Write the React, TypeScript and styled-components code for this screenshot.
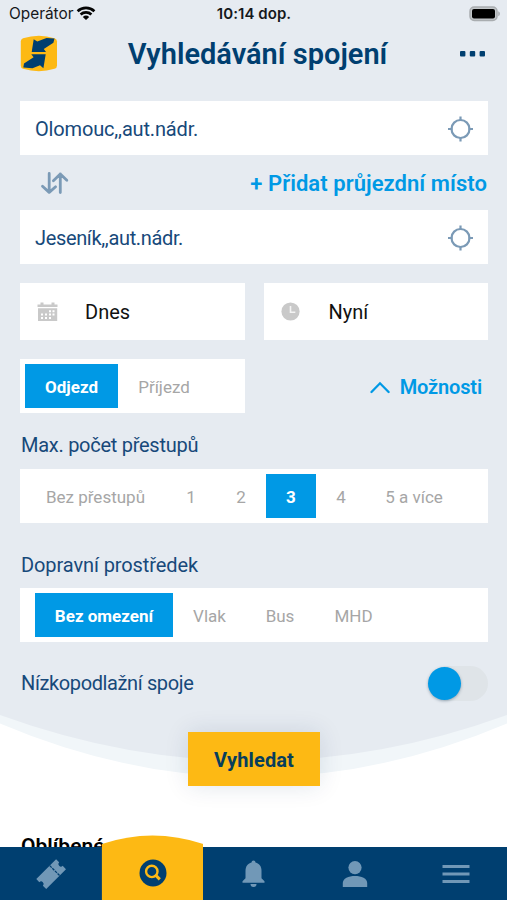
import React from "react";
import styled, { createGlobalStyle } from "styled-components";

const navy = "#003f70";
const blue = "#0099e5";
const yellow = "#fdb914";
const steel = "#7b9ab6";

const GlobalStyle = createGlobalStyle`
  * { box-sizing: border-box; }
  body { margin: 0; background: #fff; }
  button { border: 0; padding: 0; background: none; font: inherit; color: inherit; letter-spacing: inherit; }
  svg { display: block; flex: none; }
`;

const Screen = styled.div`
  width: 507px;
  height: 900px;
  display: flex;
  flex-direction: column;
  overflow: hidden;
  background: #fff;
  color: ${navy};
  font-family: Roboto, sans-serif;
  white-space: nowrap;
`;

const Scroll = styled.main`
  flex: 1;
  min-height: 0;
  overflow: hidden;
`;

const Panel = styled.section`
  height: 714px;
  background: #e6ebf1;
`;

const StatusBar = styled.div`
  display: grid;
  grid-template-columns: 1fr auto 1fr;
  align-items: center;
  height: 27px;
  padding: 0 6px 0 9px;
  color: #15181b;
  font: 400 15.4px Inter, sans-serif;
`;

const Carrier = styled.div`
  display: flex;
  align-items: center;
  gap: 2px;
`;

const Clock = styled.div`
  margin-right: 2px;
  font-weight: 600;
  font-size: 15px;
  letter-spacing: 0.05px;
`;

const BatterySlot = styled.div`
  display: flex;
  justify-content: flex-end;
`;

const Header = styled.header`
  display: flex;
  align-items: center;
  justify-content: space-between;
  height: 74px;
  padding: 0 21px 21px 20px;
`;

const Title = styled.h1`
  margin: 1px 0 0 -2px;
  font-size: 29px;
  font-weight: 600;
`;

const Form = styled.div`
  padding: 0 19px 0 20px;
`;

const PlaceField = styled.div<{ $track: string }>`
  display: flex;
  align-items: center;
  justify-content: space-between;
  height: 54px;
  padding: 1px 15px 0 15px;
  background: #fff;
  color: #17497a;
  font-size: 20px;
  letter-spacing: ${(p) => p.$track};
`;

const ViaRow = styled.div`
  display: flex;
  align-items: center;
  justify-content: space-between;
  height: 55px;
  padding: 2px 1px 0 20px;
`;

const LinkButton = styled.button`
  display: flex;
  align-items: center;
  gap: 9px;
  color: ${blue};
  font-weight: 600;
`;

const ViaButton = styled(LinkButton)`
  font-size: 22px;
  letter-spacing: 0.06px;
`;

const OptionsButton = styled(LinkButton)`
  padding: 2px 6px 0 0;
  font-size: 20px;
  letter-spacing: -0.15px;
`;

const TimeRow = styled.div`
  display: grid;
  grid-template-columns: 1fr 1fr;
  gap: 19px;
  margin: 19px 0;
`;

const TimeField = styled.div`
  display: grid;
  grid-template-columns: 48px 1fr;
  align-items: center;
  height: 57px;
  padding: 1px 17px 0;
  background: #fff;
  color: #111;
  font-size: 20px;
`;

const DirectionRow = styled.div`
  display: flex;
  align-items: center;
  justify-content: space-between;
`;

const Segments = styled.div<{ $inset?: number; $width?: string }>`
  display: flex;
  width: ${(p) => p.$width ?? "100%"};
  height: 54px;
  padding: 5px 5px 5px ${(p) => p.$inset ?? 5}px;
  background: #fff;
`;

const Segment = styled.button<{ $width: number; $active?: boolean }>`
  width: ${(p) => p.$width}px;
  padding-top: 2px;
  background: ${(p) => (p.$active ? blue : "transparent")};
  color: ${(p) => (p.$active ? "#fff" : "#a6a6a6")};
  font-size: 17px;
  font-weight: ${(p) => (p.$active ? 700 : 400)};
  text-align: center;
`;

const Label = styled.div<{ $height: number; $track: string }>`
  display: flex;
  align-items: center;
  height: ${(p) => p.$height}px;
  padding-left: 1px;
  font-size: 20px;
  letter-spacing: ${(p) => p.$track};
  color: #17497a;
`;

const TransfersLabel = styled(Label)`
  padding-top: 7px;
`;

const VehicleLabel = styled(Label)`
  padding-top: 18px;
`;

const AccessRow = styled.div`
  display: flex;
  align-items: center;
  justify-content: space-between;
  height: 82px;
`;

const Toggle = styled.button`
  display: flex;
  align-items: center;
  width: 60px;
  height: 35px;
  border-radius: 18px;
  background: linear-gradient(90deg, transparent 15px, #dfe4e8 16px);
`;

const Thumb = styled.span`
  width: 33px;
  height: 33px;
  border-radius: 50%;
  background: ${blue};
  box-shadow: 0 1px 3px rgba(0, 40, 70, 0.35);
`;

const Submit = styled.button`
  display: block;
  position: relative;
  width: 132px;
  height: 54px;
  margin: -50px auto 0 188px;
  padding-top: 2px;
  background: ${yellow};
  color: #073e5c;
  font-size: 20px;
  font-weight: 700;
  letter-spacing: 0.1px;
  box-shadow: 0 0 24px rgba(0, 50, 90, 0.12);
`;

const Favourites = styled.h2`
  margin: 45px 0 0 21px;
  color: #000;
  font-size: 21px;
  font-weight: 600;
  line-height: 30px;
`;

const TabBar = styled.nav`
  display: grid;
  grid-template-columns: repeat(5, 1fr);
  height: 53px;
  background: ${navy};
  color: #7198b7;
  position: relative;
`;

const Tab = styled.button`
  display: flex;
  align-items: center;
  justify-content: center;
`;

const ActiveTab = styled(Tab)`
  height: 65px;
  margin-top: -12px;
  padding: 11px 0 0 1px;
  background: ${yellow};
  clip-path: path("M0.5 9 Q51 -8 102 9 V65 H0.5Z");
`;

const WifiIcon = () => (
  <svg width="20" height="15" viewBox="0 0 20 15" fill="none" stroke="#050505" strokeWidth="2.7">
    <path d="M1.6 5.2a12.3 12.3 0 0 1 16.800 0M4.600 8.500a8 8 0 0 1 10.800 0" />
    <path d="M10 14 6.800 10.900a4.700 4.700 0 0 1 6.400 0Z" fill="#050505" stroke="none" />
  </svg>
);

const BatteryIcon = () => (
  <svg width="32" height="16" viewBox="0 0 32 16">
    <rect x="1" y="1" width="27" height="13.5" rx="4.2" fill="#c3c7ca" stroke="#a9adb0" strokeWidth="1.5" />
    <rect x="3" y="3" width="23" height="9.5" rx="2" />
    <path d="M29.3 5.3c2 .7 2 4.2 0 4.9Z" fill="#a1a5a8" />
  </svg>
);

const Logo = () => (
  <svg width="38" height="38" viewBox="0 0 38 38">
    <path d="M.8 6.500Q.8 4.300 3 3.300Q19-2 34.500 3.300Q37 4.300 37 6.500V30.500Q37 33 34.500 33.800Q19 38.500 3 33.800Q.8 33 .8 30.500Z" fill={yellow} />
    <path d="M11.700 17 13.700 4.300 17.300 6.500 26.500 3.100 34.500 3.600 33.400 7.800 23.800 14 26 17ZM11.300 19.300H25.700L23.400 33.300 20 30.200 12.500 33.300 3.300 32.500 4 28.600 13.600 22.300Z" fill={navy} />
  </svg>
);

const MoreIcon = () => (
  <svg width="27" height="6" viewBox="0 0 27 6" fill={navy}>
    <rect x="1" y="0" width="5.4" height="5.4" rx="1" />
    <rect x="10.8" y="0" width="5.4" height="5.4" rx="1" />
    <rect x="20.6" y="0" width="5.4" height="5.4" rx="1" />
  </svg>
);

const LocateIcon = () => (
  <svg width="26" height="26" viewBox="0 0 26 26" fill="none" stroke={steel} strokeWidth="2.2">
    <circle cx="13.5" cy="13" r="9" />
    <path d="M13.500.5v4.500M13.500 21v4.500M1 13h4.500M21.500 13H26" />
  </svg>
);

const SwapIcon = () => (
  <svg width="29" height="23" viewBox="0 0 29 23" fill="none" stroke={steel} strokeWidth="2.8" strokeLinecap="round" strokeLinejoin="round">
    <path d="M9.200 1.500v18.800M2.500 14.200l6.700 6.200 6.400-5.600M20.300 20.500V2M13.400 8.700l6.900-6.700 6.500 6.200" />
  </svg>
);

const CalendarIcon = () => (
  <svg width="21" height="20" viewBox="0 0 21 20">
    <path d="M.5 2.500h3V.4h3v2.100h8V.4h3v2.100h3V5H.5ZM1 6.200h19.200V19H1Z" fill="#c9c9c9" />
    <path d="M12 8.200h2v2h-2ZM15.500 8.200h2v2h-2ZM4 11.600h2v2H4ZM8 11.600h2v2H8ZM12 11.600h2v2h-2ZM15.500 11.600h2v2h-2ZM4 15h2v2H4ZM8 15h2v2H8ZM12 15h2v2h-2Z" fill="#fff" />
  </svg>
);

const TimeIcon = () => (
  <svg width="20" height="20" viewBox="0 0 20 20">
    <circle cx="9.500" cy="9.500" r="9.100" fill="#c9c9c9" />
    <path d="M9.500 4v6.300h4.800" fill="none" stroke="#f4f4f4" strokeWidth="1.600" />
  </svg>
);

const ChevronIcon = () => (
  <svg width="21" height="13" viewBox="0 0 21 13" fill="none" stroke={blue} strokeWidth="2.3" strokeLinecap="round">
    <path d="M1.500 11 10 2.300 18.600 11" />
  </svg>
);

const PanelCurve = () => (
  <svg width="507" height="68" viewBox="0 0 507 68">
    <path d="M0 0H507V9.500Q253.500 117 0 9.500Z" fill="#f1f6f9" />
    <path d="M0 0H507V1Q253.500 93 0 1Z" fill="#e6ebf1" />
  </svg>
);

const TicketIcon = () => (
  <svg width="30" height="30" viewBox="0 0 30 30">
    <g transform="rotate(-45 15 15)">
      <path d="M1 8.200H29V12.500a2.500 2.500 0 0 0 0 5v4.700H1V17.500a2.500 2.500 0 0 0 0-5Z" fill="currentColor" />
      <path d="M20 8.200v14" stroke={navy} strokeWidth="1.300" strokeDasharray="2.800 .9" />
    </g>
  </svg>
);

const SearchIcon = () => (
  <svg width="28" height="28" viewBox="0 0 28 28" fill="none" stroke={yellow}>
    <circle cx="14" cy="14" r="13.500" fill={navy} stroke="none" />
    <circle cx="12.800" cy="12.400" r="5.700" strokeWidth="2.400" />
    <path d="m16.800 16.400 4 4" strokeWidth="3" />
  </svg>
);

const BellIcon = () => (
  <svg width="26" height="28" viewBox="0 0 26 28" fill="currentColor">
    <path d="M11.500 2.600a2 2 0 0 1 4 0c4 1 6 4.100 6 8.400v7.200l3 3v1.500h-22v-1.500l3-3V11c0-4.300 2-7.400 6-8.400ZM10.500 24.100h6a3 3 0 0 1-6 0Z" />
  </svg>
);

const PersonIcon = () => (
  <svg width="26" height="28" viewBox="0 0 26 28" fill="currentColor">
    <circle cx="13" cy="7.600" r="6.600" />
    <path d="M.8 27v-4C.8 18.300 6.500 15.900 13 15.900S25.200 18.300 25.200 23v4Z" />
  </svg>
);

const MenuIcon = () => (
  <svg width="28" height="20" viewBox="0 0 28 20" fill="currentColor">
    <path d="M.5 1h27v3H.5ZM.5 8.500h27v3H.5ZM.5 16h27v3H.5Z" />
  </svg>
);

export default function App() {
  return (
    <Screen>
      <GlobalStyle />
      <Scroll>
        <Panel>
          <StatusBar>
            <Carrier>Operátor <WifiIcon /></Carrier>
            <Clock>10:14 dop.</Clock>
            <BatterySlot><BatteryIcon /></BatterySlot>
          </StatusBar>
          <Header>
            <Logo />
            <Title>Vyhledávání spojení</Title>
            <MoreIcon />
          </Header>
          <Form>
            <PlaceField $track="-0.16px">Olomouc,,aut.nádr.<LocateIcon /></PlaceField>
            <ViaRow>
              <SwapIcon />
              <ViaButton>+ Přidat průjezdní místo</ViaButton>
            </ViaRow>
            <PlaceField $track="-0.35px">Jeseník,,aut.nádr.<LocateIcon /></PlaceField>
            <TimeRow>
              <TimeField><CalendarIcon />Dnes</TimeField>
              <TimeField><TimeIcon />Nyní</TimeField>
            </TimeRow>
            <DirectionRow>
              <Segments $width="225px">
                <Segment $width={93} $active>Odjezd</Segment>
                <Segment $width={92}>Příjezd</Segment>
              </Segments>
              <OptionsButton><ChevronIcon />Možnosti</OptionsButton>
            </DirectionRow>
            <TransfersLabel $height={56} $track="-0.27px">Max. počet přestupů</TransfersLabel>
            <Segments>
              <Segment $width={141}>Bez přestupů</Segment>
              <Segment $width={50}>1</Segment>
              <Segment $width={50}>2</Segment>
              <Segment $width={50} $active>3</Segment>
              <Segment $width={50}>4</Segment>
              <Segment $width={96}>5 a více</Segment>
            </Segments>
            <VehicleLabel $height={65} $track="-0.1px">Dopravní prostředek</VehicleLabel>
            <Segments $inset={15}>
              <Segment $width={138} $active>Bez omezení</Segment>
              <Segment $width={73}>Vlak</Segment>
              <Segment $width={68}>Bus</Segment>
              <Segment $width={79}>MHD</Segment>
            </Segments>
            <AccessRow>
              <Label $height={35} $track="-0.38px">Nízkopodlažní spoje</Label>
              <Toggle aria-label="Nízkopodlažní spoje"><Thumb /></Toggle>
            </AccessRow>
          </Form>
        </Panel>
        <PanelCurve />
        <Submit>Vyhledat</Submit>
        <Favourites>Oblíbené</Favourites>
      </Scroll>
      <TabBar>
        <Tab><TicketIcon /></Tab>
        <ActiveTab><SearchIcon /></ActiveTab>
        <Tab><BellIcon /></Tab>
        <Tab><PersonIcon /></Tab>
        <Tab><MenuIcon /></Tab>
      </TabBar>
    </Screen>
  );
}
